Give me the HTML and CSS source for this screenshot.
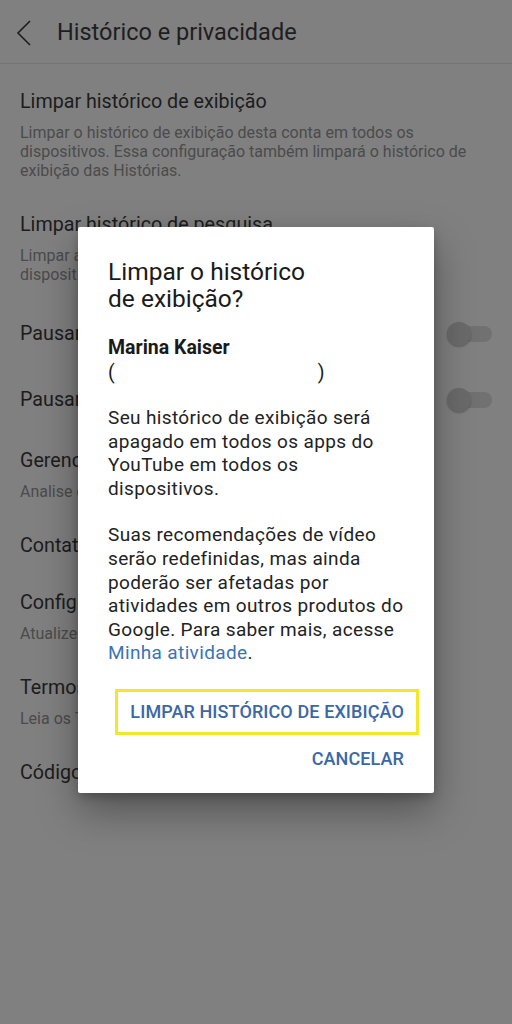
FILE: index.html
```html
<!DOCTYPE html>
<html lang="pt-BR">
<head>
<meta charset="utf-8">
<title>Histórico e privacidade</title>
<link rel="stylesheet" href="styles.css">
</head>
<body>
<div class="screen">
  <header class="topbar">
    <svg class="back" width="16" height="26" viewBox="0 0 16 26" aria-hidden="true">
      <path d="M14 1 L2 13 L14 25" fill="none" stroke="#1e1e1e" stroke-width="1.6"/>
    </svg>
    <h1 class="topbar-title">Histórico e privacidade</h1>
  </header>

  <ul class="settings">
    <li class="item">
      <div class="item-title">Limpar histórico de exibição</div>
      <div class="item-sub">Limpar o histórico de exibição desta conta em todos os dispositivos. Essa configuração também limpará o histórico de exibição das Histórias.</div>
    </li>
    <li class="item">
      <div class="item-title">Limpar histórico de pesquisa</div>
      <div class="item-sub">Limpar as pesquisas anteriores desta conta em todos os dispositivos.</div>
    </li>
    <li class="item item-toggle">
      <div class="item-title">Pausar histórico de exibição</div>
      <span class="toggle"><span class="thumb"></span></span>
    </li>
    <li class="item item-toggle">
      <div class="item-title">Pausar histórico de pesquisa</div>
      <span class="toggle"><span class="thumb"></span></span>
    </li>
    <li class="item">
      <div class="item-title">Gerenciar todas as atividades</div>
      <div class="item-sub">Analise e gerencie suas atividades</div>
    </li>
    <li class="item">
      <div class="item-title">Contatos do YouTube</div>
    </li>
    <li class="item">
      <div class="item-title">Configurações de anúncios</div>
      <div class="item-sub">Atualize as preferências de anúncios</div>
    </li>
    <li class="item">
      <div class="item-title">Termos e Política de Privacidade</div>
      <div class="item-sub">Leia os Termos de Serviço</div>
    </li>
    <li class="item">
      <div class="item-title">Código-fonte aberto</div>
    </li>
  </ul>

  <div class="dialog" role="dialog">
    <h2 class="dialog-title">Limpar o histórico<br>de exibição?</h2>
    <div class="account">
      <div class="account-name">Marina Kaiser</div>
      <div class="account-mail">(<span class="mail-hidden"></span>)</div>
    </div>
    <p class="dialog-text">Seu histórico de exibição será apagado em todos os apps do YouTube em todos os dispositivos.</p>
    <p class="dialog-text">Suas recomendações de vídeo serão redefinidas, mas ainda poderão ser afetadas por atividades em outros produtos do Google. Para saber mais, acesse <a class="link" href="#">Minha atividade</a>.</p>
    <div class="actions">
      <button class="btn btn-highlight">LIMPAR HISTÓRICO DE EXIBIÇÃO</button>
      <button class="btn">CANCELAR</button>
    </div>
  </div>
</div>
</body>
</html>
```

FILE: styles.css
```css
* { box-sizing: border-box; }
html, body { margin: 0; padding: 0; }
body {
  font-family: Roboto, "Noto Sans", "Liberation Sans", sans-serif;
  background: #808080;
}
.screen {
  position: relative;
  width: 512px;
  height: 1024px;
  overflow: hidden;
  background: #808080;
}
.topbar {
  height: 64px;
  display: flex;
  align-items: center;
  padding-left: 16px;
  border-bottom: 1px solid #747474;
}
.back { display: block; margin-top: 2px; }
.topbar-title {
  margin: 0 0 0 25px;
  font-size: 23.5px;
  font-weight: 400;
  color: #1e1e1e;
  line-height: 28px;
}
.settings {
  list-style: none;
  margin: 0;
  padding: 10px 0 0;
}
.item {
  padding: 16px 20px 17px;
}
.item-toggle {
  display: flex;
  align-items: center;
  justify-content: space-between;
  padding: 21px 20px 21px;
}
.item-title {
  font-size: 19.7px;
  line-height: 24px;
  color: #1c1c1c;
  white-space: nowrap;
}
.item-sub {
  margin-top: 9px;
  font-size: 16px;
  line-height: 19px;
  color: #4b4b4b;
}
.toggle {
  position: relative;
  width: 45px;
  height: 24px;
  display: flex;
  align-items: center;
  flex: none;
}
.toggle::before {
  content: "";
  position: absolute;
  left: 8px;
  right: 0;
  height: 16px;
  border-radius: 8px;
  background: #717171;
}
.thumb {
  position: relative;
  width: 24px;
  height: 24px;
  border-radius: 50%;
  background: #6a6a6a;
  box-shadow: 0 1px 2px rgba(0,0,0,0.25);
}
.dialog {
  position: absolute;
  left: 78px;
  top: 227px;
  width: 356px;
  height: 566px;
  background: #fff;
  border-radius: 2px;
  padding: 31px 15px 0 30px;
  box-shadow: 0 18px 40px rgba(0,0,0,0.35), 0 4px 10px rgba(0,0,0,0.2);
}
.dialog-title {
  margin: 0;
  font-size: 24.5px;
  font-weight: 400;
  line-height: 27px;
  color: #1a1a1a;
}
.account {
  margin-top: 23px;
  font-size: 19.5px;
  line-height: 25px;
  color: #1a1a1a;
}
.account-name { font-weight: 700; }
.mail-hidden {
  display: inline-block;
  width: 203px;
}
.dialog-text {
  margin: 21px 13px 0 0;
  font-size: 19px;
  line-height: 23.6px;
  letter-spacing: 0.36px;
  color: #222;
}
.dialog-text + .dialog-text { margin-top: 23px; }
.link { color: #3a74b6; text-decoration: none; }
.actions {
  margin-top: 24px;
  display: flex;
  flex-direction: column;
  align-items: flex-end;
}
.btn {
  font-family: inherit;
  font-size: 18px;
  font-weight: 500;
  letter-spacing: 0.1px;
  color: #3a68a6;
  background: none;
  border: 3px solid transparent;
  padding: 0 12px;
  height: 48px;
  line-height: 42px;
  cursor: pointer;
}
.btn-highlight { border-color: #f4e62c; height: 46px; line-height: 40px; }
```
